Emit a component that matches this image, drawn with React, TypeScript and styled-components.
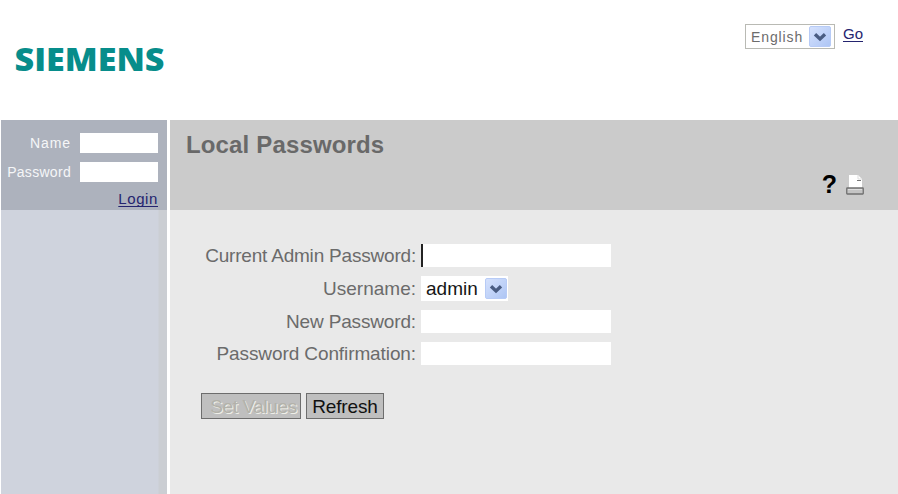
import React from "react";
import styled, { createGlobalStyle } from "styled-components";

const GlobalStyle = createGlobalStyle`
  * { box-sizing: border-box; }
  body { margin: 0; background: #fff; font-family: "Liberation Sans", Arial, sans-serif; overflow: hidden; }
`;

const Page = styled.div`
  display: flex;
  flex-direction: column;
  width: 898px;
  height: 494px;
  background: #fff;
`;

const Header = styled.header`
  display: flex;
  justify-content: space-between;
  align-items: flex-start;
  height: 120px;
  padding: 24px 35px 0 15px;
`;

const Logo = styled.svg`
  display: block;
  margin-top: 16px;
  overflow: visible;
`;

const Language = styled.div`
  display: flex;
  align-items: flex-start;
  gap: 8px;
`;

const LanguageSelect = styled.div`
  display: flex;
  align-items: center;
  justify-content: space-between;
  width: 90px;
  height: 25px;
  padding: 0 3px 0 5px;
  border: 1px solid #b9bab4;
  color: #6c6c6c;
  font-size: 14px;
  letter-spacing: 0.9px;
`;

const Link = styled.a<{ $size: number; $spacing?: number }>`
  color: #24246f;
  font-size: ${(p) => p.$size}px;
  line-height: 20px;
  letter-spacing: ${(p) => p.$spacing ?? 0}px;
  text-decoration: underline;
  text-decoration-skip-ink: none;
  text-underline-offset: 2px;
`;

const Body = styled.div`
  display: flex;
  flex: 1;
  gap: 3px;
  padding-left: 1px;
`;

const Sidebar = styled.aside`
  display: flex;
  flex-direction: column;
  width: 166px;
  background: linear-gradient(to right, #cfd3dd 157px, #cbced3 158px);
`;

const LoginPanel = styled.div`
  display: flex;
  flex-direction: column;
  align-items: flex-end;
  height: 90px;
  padding: 13px 9px 0 0;
  background: #adb2bd;
`;

const LoginRow = styled.label<{ $spacing: number }>`
  display: flex;
  align-items: center;
  gap: 9px;
  height: 20px;
  margin-bottom: 9px;
  color: #f5f6f8;
  font-size: 14px;
  letter-spacing: ${(p) => p.$spacing}px;
`;

const LoginAction = styled.div`
  display: flex;
  height: 20px;
  margin-top: -2px;
`;

const Field = styled.div<{ $width: number; $height: number }>`
  width: ${(p) => p.$width}px;
  height: ${(p) => p.$height}px;
  background: #fff;
`;

const Caret = styled.div`
  width: 2px;
  height: 100%;
  background: #222;
`;

const Main = styled.main`
  flex: 1;
  background: #e9e9e9;
`;

const TitleBar = styled.div`
  display: flex;
  justify-content: space-between;
  height: 90px;
  padding: 10px 34px 0 16px;
  background: #cbcbcb;
`;

const Title = styled.h1`
  margin: 0;
  color: #696969;
  font-size: 24px;
  line-height: 30px;
  letter-spacing: 0.15px;
`;

const Tools = styled.div`
  display: flex;
  align-items: flex-start;
  gap: 9px;
  padding-top: 40px;
`;

const Help = styled.span`
  color: #000;
  font-size: 25px;
  font-weight: bold;
  line-height: 28px;
`;

const PrintIcon = styled.svg`
  display: block;
  margin-top: 5px;
`;

const Form = styled.div`
  display: grid;
  grid-template-columns: 246px auto;
  grid-template-rows: 23px 25px 23px 23px;
  column-gap: 5px;
  row-gap: 9px;
  justify-content: start;
  align-items: center;
  padding-top: 34px;
`;

const Label = styled.label<{ $spacing?: number }>`
  color: #6b6b6b;
  font-size: 19px;
  line-height: 23px;
  text-align: right;
  white-space: nowrap;
  letter-spacing: ${(p) => p.$spacing ?? 0}px;
`;

const UserSelect = styled.div`
  display: flex;
  align-items: center;
  justify-content: space-between;
  width: 87px;
  height: 25px;
  padding: 0 1px 0 5px;
  background: #fff;
  color: #151515;
  font-size: 19px;
`;

const Buttons = styled.div`
  display: flex;
  gap: 5px;
  padding: 28px 0 0 31px;
`;

const Button = styled.button<{ $width: number }>`
  width: ${(p) => p.$width}px;
  height: 26px;
  padding: 0;
  border: 1px solid #6d6d6d;
  background: #bfbfbf;
  color: #111;
  font: 19px/23px "Liberation Sans", Arial, sans-serif;
  letter-spacing: -0.15px;
  white-space: nowrap;
  &:disabled {
    padding-left: 5px;
    color: #b3b2aa;
    letter-spacing: -0.4px;
    text-shadow: 1px 1px 0 #efefe8;
  }
`;

const Arrow = () => (
  <svg width="22" height="21" viewBox="0 0 22 21">
    <defs>
      <linearGradient id="arrowFill" x1="0" y1="0" x2="1" y2="1">
        <stop offset="0" stopColor="#d6e2fd" />
        <stop offset="1" stopColor="#adc5f4" />
      </linearGradient>
    </defs>
    <rect x="0.5" y="0.5" width="21" height="20" rx="1.5" fill="url(#arrowFill)" stroke="#b7cbf6" />
    <path d="M6 8.2 L11 13 L16 8.2" fill="none" stroke="#495c82" strokeWidth="3.3" />
  </svg>
);

const Printer = () => (
  <PrintIcon width="18" height="21" viewBox="0 0 18 21">
    <path d="M3 0h9l4 4v9H3z" fill="#fff" />
    <path d="M12 0v4h4" fill="none" stroke="#ddd" />
    <path d="M11 5.5h4" stroke="#777" />
    <rect x="0.75" y="13" width="16.5" height="6" rx="0.5" fill="#c4c4c4" stroke="#707070" strokeWidth="1.3" />
    <path d="M2 14.5h14" stroke="#dedede" />
  </PrintIcon>
);

export default function App() {
  return (
    <Page>
      <GlobalStyle />
      <Header>
        <Logo width="149" height="40" role="img" aria-label="Siemens">
          <text x="-0.5" y="31" textLength="150" lengthAdjust="spacingAndGlyphs" fill="#078d8b" fontFamily="Open Sans, sans-serif" fontWeight="800" fontSize="32">SIEMENS</text>
        </Logo>
        <Language>
          <LanguageSelect>English<Arrow /></LanguageSelect>
          <Link $size={15}>Go</Link>
        </Language>
      </Header>
      <Body>
        <Sidebar>
          <LoginPanel>
            <LoginRow $spacing={0.9}>Name<Field $width={78} $height={20} /></LoginRow>
            <LoginRow $spacing={0.3}>Password<Field $width={78} $height={20} /></LoginRow>
            <LoginAction><Link $size={15} $spacing={0.6}>Login</Link></LoginAction>
          </LoginPanel>
        </Sidebar>
        <Main>
          <TitleBar>
            <Title>Local Passwords</Title>
            <Tools><Help>?</Help><Printer /></Tools>
          </TitleBar>
          <Form>
            <Label $spacing={-0.2}>Current Admin Password:</Label>
            <Field $width={190} $height={23}><Caret /></Field>
            <Label>Username:</Label>
            <UserSelect>admin<Arrow /></UserSelect>
            <Label $spacing={-0.15}>New Password:</Label>
            <Field $width={190} $height={23} />
            <Label $spacing={-0.1}>Password Confirmation:</Label>
            <Field $width={190} $height={23} />
          </Form>
          <Buttons>
            <Button $width={100} disabled>Set Values</Button>
            <Button $width={78}>Refresh</Button>
          </Buttons>
        </Main>
      </Body>
    </Page>
  );
}
